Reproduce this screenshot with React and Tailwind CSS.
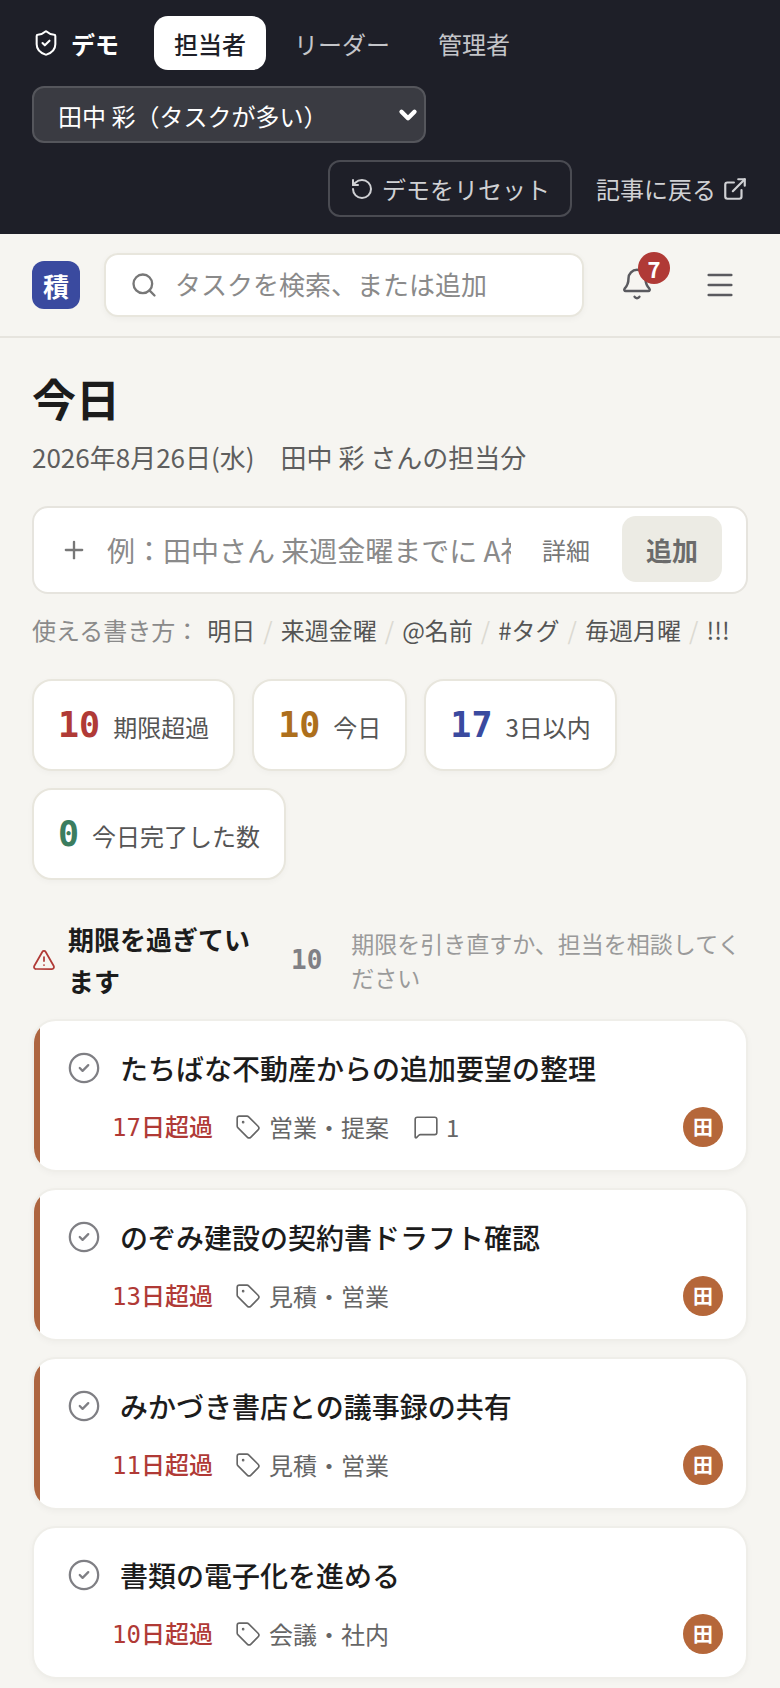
import { ShieldCheck, ChevronDown, RotateCcw, ExternalLink, Search, Bell, Menu, Plus, TriangleAlert, CircleCheck, Tag, MessageSquare } from 'lucide-react'

const STATS_TOP = [
  { num: '10', label: '期限超過', color: 'text-[#b03a36]' },
  { num: '10', label: '今日', color: 'text-[#ad6f1c]' },
  { num: '17', label: '3日以内', color: 'text-[#3a4a9f]' },
]

const HINTS = ['明日', '来週金曜', '@名前', '#タグ', '毎週月曜', '!!!']

const TASKS = [
  { id: 1, title: 'たちばな不動産からの追加要望の整理', days: '17', tags: '営業・提案', comments: 1, accent: true },
  { id: 2, title: 'のぞみ建設の契約書ドラフト確認', days: '13', tags: '見積・営業', accent: true },
  { id: 3, title: 'みかづき書店との議事録の共有', days: '11', tags: '見積・営業', accent: true },
  { id: 4, title: '書類の電子化を進める', days: '10', tags: '会議・社内', accent: false },
]

function StatCard({ num, label, color }) {
  return (
    <div className="flex h-[92px] items-center gap-[13px] rounded-[20px] border-2 border-[#e8e6dd] bg-white pl-[24px] pr-[24px] shadow-[0_2px_6px_rgba(0,0,0,0.03)]">
      <span className={`font-['DejaVu_Sans_Mono',monospace] text-[35px] font-bold ${color}`}>{num}</span>
      <span className="mt-[4px] text-[24px] text-[#555555]">{label}</span>
    </div>
  )
}

function TaskCard({ task }) {
  return (
    <div className="flex h-[153px] overflow-hidden rounded-[24px] border-2 border-[#efeee9] bg-white shadow-[0_2px_6px_rgba(0,0,0,0.03)]">
      <div className={`w-[6px] shrink-0 ${task.accent ? 'bg-[#ad6540]' : ''}`} />
      <div className="flex-1 pl-[27px] pr-[23px] pt-[23px]">
        <div className="flex items-center gap-[19px]">
          <CircleCheck className="h-[34px] w-[34px] shrink-0 text-[#7f7f84]" strokeWidth={1.6} />
          <p className="text-[28px] font-medium leading-[48px] text-[#1c1c1c]">{task.title}</p>
        </div>
        <div className="mt-[15px] flex items-center pl-[45px]">
          <span className="text-[24px] font-medium text-[#b03a36]">
            <span className="font-['DejaVu_Sans_Mono',monospace]">{task.days}</span>日超過
          </span>
          <Tag className="ml-[22px] h-[26px] w-[26px] text-[#666666]" strokeWidth={1.5} />
          <span className="ml-[8px] text-[24px] text-[#666666]">{task.tags}</span>
          {task.comments && (
            <>
              <MessageSquare className="ml-[24px] h-[26px] w-[26px] text-[#666666]" strokeWidth={1.5} />
              <span className="ml-[7px] text-[24px] text-[#666666]">{task.comments}</span>
            </>
          )}
          <span className="ml-auto flex h-[40px] w-[40px] items-center justify-center rounded-full bg-[#b5673a] text-[20px] font-bold text-white">田</span>
        </div>
      </div>
    </div>
  )
}

export default function App() {
  return (
    <div className="h-[1688px] overflow-hidden bg-[#f6f5f1] font-['Noto_Sans_CJK_JP',sans-serif]">
      {/* デモバー */}
      <div className="h-[234px] bg-[#1e1f28] px-[32px] pt-[16px]">
        <div className="flex h-[54px] items-center">
          <ShieldCheck className="h-[28px] w-[28px] text-white" strokeWidth={1.75} />
          <span className="ml-[11px] mr-[35px] pt-[2px] text-[24px] font-bold text-white">デモ</span>
          <span className="flex h-[54px] items-center rounded-[14px] bg-white px-[20px] pt-[2px] text-[24px] font-medium text-[#1e1f28]">担当者</span>
          <span className="ml-[8px] flex h-[54px] items-center px-[20px] pt-[2px] text-[24px] text-[#c4c5c9]">リーダー</span>
          <span className="ml-[8px] flex h-[54px] items-center px-[20px] pt-[2px] text-[24px] text-[#c4c5c9]">管理者</span>
        </div>
        <div className="mt-[16px] flex h-[57px] w-[394px] items-center justify-between rounded-[12px] border-2 border-[#55565c] bg-[#3a3b42] pl-[24px] pr-[3px] text-[24px] text-white">
          <span className="pt-[2px]">田中 彩（タスクが多い）</span>
          <ChevronDown className="h-[26px] w-[26px] text-white" strokeWidth={4} />
        </div>
        <div className="mt-[17px] flex items-center justify-end">
          <div className="flex h-[57px] items-center gap-[8px] rounded-[12px] border-2 border-[#4a4b52] px-[20px] text-[24px] text-[#d0d1d4]">
            <RotateCcw className="h-[24px] w-[24px]" strokeWidth={2} />
            デモをリセット
          </div>
          <div className="ml-[24px] flex items-center gap-[6px] text-[24px] text-[#d0d1d4]">
            記事に戻る
            <ExternalLink className="h-[26px] w-[26px]" strokeWidth={2} />
          </div>
        </div>
      </div>

      {/* ヘッダー */}
      <div className="flex h-[104px] items-center border-b-2 border-[#e6e4de] px-[32px]">
        <div className="flex h-[48px] w-[48px] items-center justify-center rounded-[12px] bg-[#3a4a9f] text-[26px] font-bold text-white">積</div>
        <div className="ml-[24px] flex h-[64px] w-[480px] items-center rounded-[14px] border-2 border-[#e8e6dd] bg-white pl-[24px] shadow-[0_2px_6px_rgba(0,0,0,0.04)]">
          <Search className="h-[28px] w-[28px] text-[#777777]" strokeWidth={2} />
          <span className="ml-[17px] pb-[3px] text-[26px] text-[#8a8a8a]">タスクを検索、または追加</span>
        </div>
        <div className="relative ml-[36px] -mt-[2px]">
          <Bell className="h-[34px] w-[34px] text-[#5a5a5f]" strokeWidth={1.75} />
          <span className="absolute left-[18px] top-[-15px] flex h-[32px] w-[32px] items-center justify-center rounded-full bg-[#b03a36] text-[22px] font-bold text-white">7</span>
        </div>
        <Menu className="ml-[49px] h-[34px] w-[34px] text-[#5a5a5f]" strokeWidth={1.75} />
      </div>

      {/* 本体 */}
      <div className="px-[32px]">
        <h1 className="mt-[30px] text-[44px] font-bold leading-[60px] text-[#1c1c1c]">今日</h1>
        <p className="mt-[10px] text-[26px] leading-[38px] text-[#5e5e5e]">2026年8月26日(水)　田中 彩 さんの担当分</p>

        <div className="mt-[30px] flex h-[88px] items-center rounded-[16px] border-2 border-[#e6e4de] bg-white pl-[26px] pr-[24px]">
          <Plus className="h-[28px] w-[28px] shrink-0 text-[#777777]" strokeWidth={2} />
          <span className="ml-[19px] w-[404px] shrink-0 overflow-hidden whitespace-nowrap text-[28px] text-[#8a8a8a]">例：田中さん 来週金曜までに A社</span>
          <span className="ml-[31px] text-[24px] text-[#777777]">詳細</span>
          <span className="ml-auto -mt-[2px] flex h-[66px] w-[100px] items-center justify-center rounded-[14px] bg-[#ecebe4] text-[26px] font-bold text-[#6b6b6b]">追加</span>
        </div>

        <div className="mt-[20px] flex items-center text-[24px] leading-[32px] text-[#555555]">
          <span className="mr-[8px] text-[#8a8a8a]">使える書き方：</span>
          {HINTS.map((h, i) => (
            <span key={h} className="flex items-center">
              {i > 0 && <span className="mx-[8px] text-[#dcdad2]">/</span>}
              {h}
            </span>
          ))}
        </div>

        <div className="mt-[33px] flex flex-wrap gap-[17px]">
          {STATS_TOP.map(s => <StatCard key={s.label} {...s} />)}
          <StatCard num="0" label="今日完了した数" color="text-[#3b7d5f]" />
        </div>

        <div className="mt-[38px] flex items-center">
          <TriangleAlert className="h-[24px] w-[24px] shrink-0 text-[#b03a36]" strokeWidth={1.75} />
          <h2 className="ml-[12px] w-[190px] shrink-0 text-[26px] font-bold leading-[42px] text-[#1c1c1c]">期限を過ぎています</h2>
          <span className="ml-[33px] font-['DejaVu_Sans_Mono',monospace] text-[26px] font-bold text-[#808085]">10</span>
          <p className="ml-[29px] text-[23px] leading-[34px] text-[#9a9a9a]">期限を引き直すか、担当を相談してください</p>
        </div>

        <div className="mt-[17px] flex flex-col gap-[16px]">
          {TASKS.map(t => <TaskCard key={t.id} task={t} />)}
        </div>
      </div>
    </div>
  )
}
